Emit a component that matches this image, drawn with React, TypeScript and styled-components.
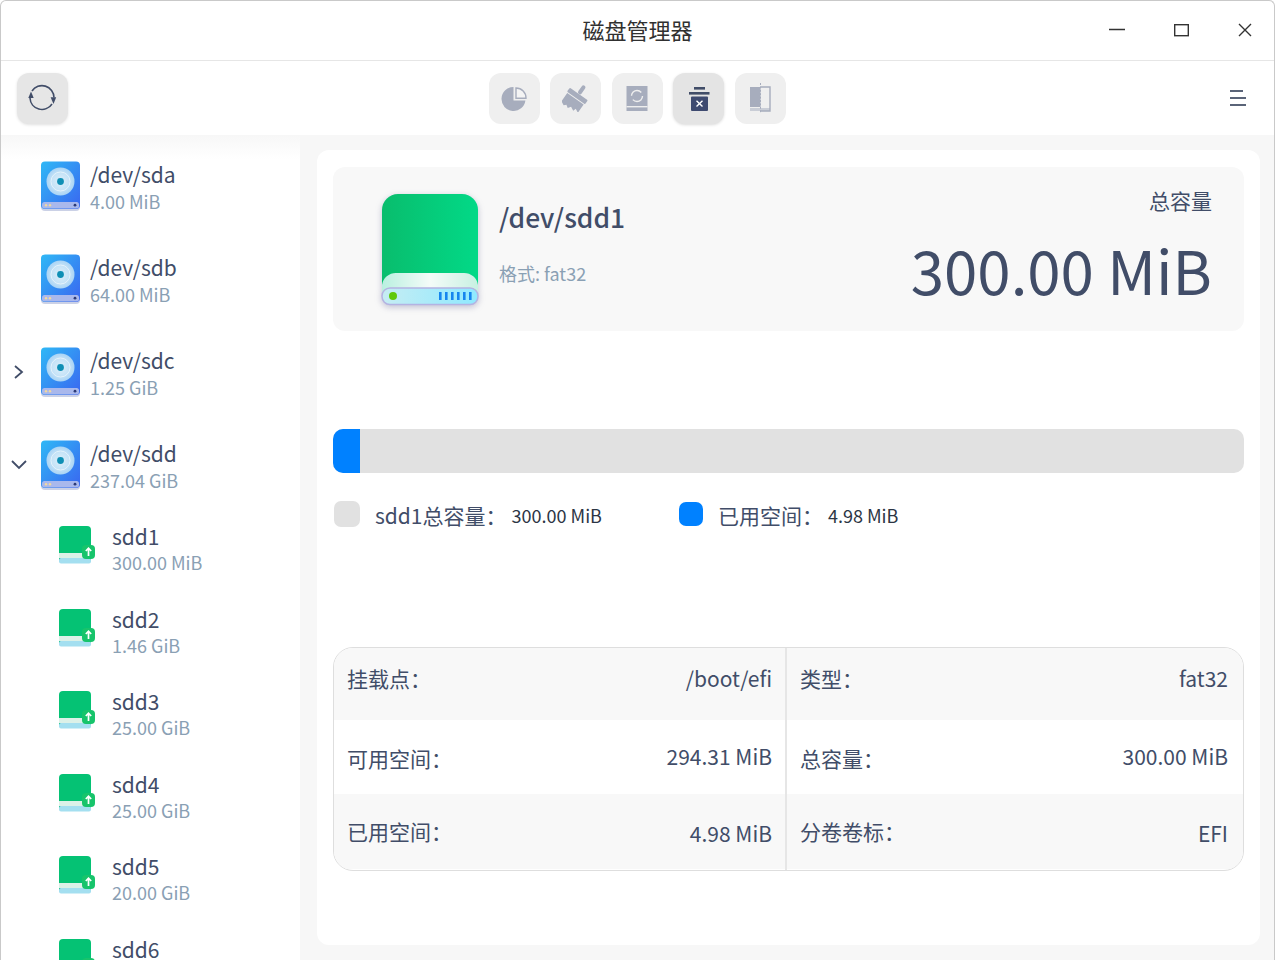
import styled, { createGlobalStyle } from 'styled-components'

const GlobalStyle = createGlobalStyle`
  html, body {
    margin: 0;
    padding: 0;
    background: #fff;
    font-family: 'Noto Sans CJK SC', 'Noto Sans', sans-serif;
    color: #414d68;
  }
  * { box-sizing: border-box; }
`

const partitions = [
  { name: 'sdd1', size: '300.00 MiB' },
  { name: 'sdd2', size: '1.46 GiB' },
  { name: 'sdd3', size: '25.00 GiB' },
  { name: 'sdd4', size: '25.00 GiB' },
  { name: 'sdd5', size: '20.00 GiB' },
  { name: 'sdd6', size: '' }
]

const disks = [
  { name: '/dev/sda', size: '4.00 MiB', arrow: '' },
  { name: '/dev/sdb', size: '64.00 MiB', arrow: '' },
  { name: '/dev/sdc', size: '1.25 GiB', arrow: 'right' },
  { name: '/dev/sdd', size: '237.04 GiB', arrow: 'down' }
]

const DiskIcon = () => (
  <svg width="42" height="52" viewBox="0 0 42 52">
    <defs>
      <linearGradient id="diskBlue" x1="0" y1="0" x2="1" y2="1">
        <stop offset="0" stopColor="#2fb8f6" />
        <stop offset="1" stopColor="#3a66f0" />
      </linearGradient>
      <radialGradient id="diskCd">
        <stop offset="0" stopColor="#dceffa" />
        <stop offset="0.6" stopColor="#c6e3f7" />
        <stop offset="1" stopColor="#a9d4f5" />
      </radialGradient>
    </defs>
    <rect x="1" y="2" width="39" height="48" rx="4" fill="#8c9ac8" opacity="0.45" />
    <rect x="1" y="0.5" width="39" height="47.5" rx="4" fill="url(#diskBlue)" />
    <circle cx="20.5" cy="20.5" r="14" fill="url(#diskCd)" />
    <circle cx="20.5" cy="20.5" r="9.5" fill="none" stroke="#e4f3fc" strokeWidth="1" />
    <circle cx="20.5" cy="20.5" r="3.4" fill="#0f8fb5" />
    <rect x="2" y="41" width="37" height="6.5" rx="2.5" fill="#a9b8ec" />
    <circle cx="6" cy="44.2" r="1.2" fill="#f0d9a0" />
    <circle cx="10" cy="44.2" r="1.2" fill="#f0d9a0" />
    <circle cx="35" cy="44.2" r="1.4" fill="#2c3a78" />
  </svg>
)

const PartIcon = () => (
  <svg width="36" height="40" viewBox="0 0 36 40">
    <rect x="0" y="0" width="32" height="37" rx="4" fill="#05c274" />
    <rect x="0" y="27" width="32" height="5" fill="#dcf1e8" />
    <rect x="0" y="32" width="32" height="5.5" rx="2" fill="#a4dff0" />
    <rect x="23" y="19" width="13" height="14" rx="4" fill="#17c46b" />
    <path d="M29.5 30v-7.5M26.8 25l2.7-2.8 2.7 2.8" stroke="#fff" strokeWidth="1.7" fill="none" />
  </svg>
)

const BigDriveIcon = () => (
  <DriveSvg width="100" height="114" viewBox="0 0 100 114">
    <defs>
      <linearGradient id="driveGreen" x1="0" y1="0" x2="1" y2="0">
        <stop offset="0" stopColor="#09bd6d" />
        <stop offset="1" stopColor="#02d987" />
      </linearGradient>
      <linearGradient id="driveFace" x1="0" y1="0" x2="1" y2="0">
        <stop offset="0" stopColor="#b9f0e0" />
        <stop offset="0.5" stopColor="#f4fbf8" />
        <stop offset="1" stopColor="#c8f0e2" />
      </linearGradient>
      <linearGradient id="driveSlot" x1="0" y1="0" x2="1" y2="0">
        <stop offset="0" stopColor="#c6edf3" />
        <stop offset="1" stopColor="#8fe9ff" />
      </linearGradient>
    </defs>
    <rect x="2" y="1" width="96" height="108" rx="16" fill="url(#driveGreen)" />
    <path d="M2 92a14 14 0 0 1 14-12h68a14 14 0 0 1 14 12v8H2z" fill="url(#driveFace)" />
    <rect x="2" y="95" width="96" height="16.5" rx="8" fill="url(#driveSlot)" stroke="#b4b3e2" strokeWidth="1.5" />
    <circle cx="13" cy="103" r="4" fill="#5fc90a" />
    <g fill="#1585ee">
      <rect x="59" y="99" width="2.6" height="8" />
      <rect x="65" y="99" width="2.6" height="8" />
      <rect x="71" y="99" width="2.6" height="8" />
      <rect x="77" y="99" width="2.6" height="8" />
      <rect x="83" y="99" width="2.6" height="8" />
      <rect x="89" y="99" width="2.6" height="8" />
    </g>
  </DriveSvg>
)

const App = () => {
  return (
    <Win>
      <GlobalStyle />
      <TitleBar>
        <Title>磁盘管理器</Title>
        <WinButtons>
          <WinButton>
            <svg width="18" height="18" viewBox="0 0 18 18"><path d="M1 8.5h16" stroke="#333" strokeWidth="1.4" /></svg>
          </WinButton>
          <WinButton>
            <svg width="18" height="18" viewBox="0 0 18 18"><rect x="2.7" y="3.7" width="13.6" height="11" fill="none" stroke="#333" strokeWidth="1.4" /></svg>
          </WinButton>
          <WinButton>
            <svg width="18" height="18" viewBox="0 0 18 18"><path d="M3 3l12 12M15 3L3 15" stroke="#333" strokeWidth="1.4" /></svg>
          </WinButton>
        </WinButtons>
      </TitleBar>

      <ToolBar>
        <RefreshButton>
          <svg width="30" height="30" viewBox="0 0 30 30" fill="none">
            <path d="M5 9A12 12 0 0 1 27 15.5" stroke="#414d68" strokeWidth="1.6" />
            <path d="M25 22A12 12 0 0 1 3 16" stroke="#414d68" strokeWidth="1.6" />
            <path d="M4 9.5L1.3 16h5.4z" fill="#414d68" />
            <path d="M26.5 22L23.6 15.3h5.6z" fill="#414d68" />
          </svg>
        </RefreshButton>
        <ToolGroup>
          <ToolButton>
            <svg width="26" height="26" viewBox="0 0 26 26">
              <path d="M12.5 2V15.5H24.4A12 12 0 1 1 12.5 2Z" fill="#a7adbd" />
              <path d="M15 3A10 10 0 0 1 25 13.3H15Z" fill="#f4f4f4" stroke="#a7adbd" strokeWidth="1.4" />
            </svg>
          </ToolButton>
          <ToolButton>
            <svg width="28" height="28" viewBox="0 0 28 28">
              <g transform="rotate(35 14 14)" fill="#a7adbd">
                <rect x="12" y="-1" width="4" height="10" rx="2" />
                <rect x="3" y="9" width="22" height="5" rx="1" />
                <path d="M4 15h20v10l-4-2-1 3-4-2-2 3-3-2-2 2-4-2z" />
              </g>
            </svg>
          </ToolButton>
          <ToolButton>
            <svg width="24" height="28" viewBox="0 0 24 28" fill="none">
              <rect x="1.5" y="2" width="21" height="25" fill="#a7adbd" />
              <rect x="1.5" y="22" width="21" height="1.4" fill="#eee" />
              <circle cx="12" cy="12" r="5.5" stroke="#eee" strokeWidth="1.4" strokeDasharray="13 4" />
            </svg>
          </ToolButton>
          <ToolButton active>
            <svg width="24" height="28" viewBox="0 0 24 28">
              <rect x="7" y="3" width="11" height="2.6" fill="#414d68" />
              <rect x="2" y="8" width="20.5" height="2.6" fill="#414d68" />
              <rect x="4" y="12.5" width="17" height="14.5" rx="1" fill="#3e4a70" />
              <path d="M9.5 16.8l6 5.8M15.5 16.8l-6 5.8" stroke="#fff" strokeWidth="1.4" />
            </svg>
          </ToolButton>
          <ToolButton>
            <svg width="26" height="30" viewBox="0 0 26 30" fill="none">
              <rect x="3" y="4" width="10.5" height="20" fill="#a7adbd" />
              <rect x="3" y="25" width="20" height="3" fill="#c9cdd6" />
              <path d="M13.5 4H23V28H13.5" stroke="#a7adbd" strokeWidth="1.4" />
              <path d="M13.5 0v30" stroke="#a7adbd" strokeWidth="1" strokeDasharray="2 1.4" />
            </svg>
          </ToolButton>
        </ToolGroup>
        <Burger>
          <span />
          <span />
          <span />
        </Burger>
      </ToolBar>

      <Body>
        <SideBar>
          {disks.map(disk => (
            <DiskRow key={disk.name}>
              <Arrow>
                {disk.arrow === 'right' && (
                  <svg width="14" height="16" viewBox="0 0 14 16"><path d="M4 2l7 6-7 6" fill="none" stroke="#414d68" strokeWidth="1.8" /></svg>
                )}
                {disk.arrow === 'down' && (
                  <svg width="16" height="14" viewBox="0 0 16 14"><path d="M1 3l7 7 7-7" fill="none" stroke="#414d68" strokeWidth="1.8" /></svg>
                )}
              </Arrow>
              <DiskIcon />
              <RowText>
                <RowName>{disk.name}</RowName>
                <RowSize>{disk.size}</RowSize>
              </RowText>
            </DiskRow>
          ))}
          {partitions.map(part => (
            <PartRow key={part.name}>
              <PartIcon />
              <RowText>
                <RowName>{part.name}</RowName>
                <RowSize>{part.size}</RowSize>
              </RowText>
            </PartRow>
          ))}
        </SideBar>

        <Main>
          <Card>
            <InfoPanel>
              <BigDriveIcon />
              <InfoText>
                <InfoName>/dev/sdd1</InfoName>
                <InfoFormat>格式: fat32</InfoFormat>
              </InfoText>
              <Capacity>
                <CapacityLabel>总容量</CapacityLabel>
                <CapacityValue>300.00 MiB</CapacityValue>
              </Capacity>
            </InfoPanel>

            <UsageBar>
              <UsageFill style={{ width: `${(27 / 911) * 100}%` }} />
            </UsageBar>

            <Legend>
              <LegendItem wide>
                <Swatch color="#e1e1e1" size={26} />
                <LegendLabel>sdd1总容量：</LegendLabel>
                <LegendValue>300.00 MiB</LegendValue>
              </LegendItem>
              <LegendItem>
                <Swatch color="#0081ff" size={24} />
                <LegendLabel>已用空间：</LegendLabel>
                <LegendValue>4.98 MiB</LegendValue>
              </LegendItem>
            </Legend>

            <Table>
              <TableRow height={72} lift={12} shaded>
                <Cell first><span>挂载点：</span><span>/boot/efi</span></Cell>
                <Cell><span>类型：</span><span>fat32</span></Cell>
              </TableRow>
              <TableRow height={74} labelShift={1} valueShift={-2}>
                <Cell first><span>可用空间：</span><span>294.31 MiB</span></Cell>
                <Cell><span>总容量：</span><span>300.00 MiB</span></Cell>
              </TableRow>
              <TableRow height={75} labelShift={-2} valueShift={2} shaded>
                <Cell first><span>已用空间：</span><span>4.98 MiB</span></Cell>
                <Cell><span>分卷卷标：</span><span>EFI</span></Cell>
              </TableRow>
            </Table>
          </Card>
        </Main>
      </Body>
    </Win>
  )
}

export default App

const Win = styled.div`
  width: 1275px;
  height: 960px;
  overflow: hidden;
  border: 1px solid #c9c9c9;
  border-bottom: none;
  border-radius: 6px 6px 0 0;
  display: flex;
  flex-direction: column;
  background: #fff;
`
const TitleBar = styled.header`
  height: 60px;
  flex: none;
  position: relative;
  display: flex;
  align-items: center;
  justify-content: center;
  border-bottom: 1px solid #e6e6e6;
  padding-bottom: 3px;
`
const Title = styled.h1`
  margin: 0;
  font-size: 22px;
  font-weight: 400;
  color: #303030;
`
const WinButtons = styled.div`
  position: absolute;
  right: 0;
  top: 0;
  display: flex;
`
const WinButton = styled.div`
  width: 64px;
  height: 58px;
  padding-left: 6px;
  display: flex;
  align-items: center;
  justify-content: center;
`
const ToolBar = styled.div`
  height: 74px;
  flex: none;
  display: flex;
  align-items: center;
  position: relative;
  padding: 0 28px 0 16px;
  justify-content: space-between;
`
const RefreshButton = styled.div`
  width: 51px;
  height: 51px;
  padding: 0 2px 2px 0;
  border-radius: 12px;
  background: #e6e6e6;
  box-shadow: 0 1px 3px rgba(0, 0, 0, 0.12);
  display: flex;
  align-items: center;
  justify-content: center;
`
const ToolGroup = styled.div`
  display: flex;
  gap: 10.5px;
  margin-right: 24px;
`
const ToolButton = styled.div<{ active?: boolean }>`
  width: 51px;
  height: 51px;
  border-radius: 12px;
  background: ${props => (props.active ? '#e4e4e4' : '#efefef')};
  box-shadow: ${props => (props.active ? '0 1px 3px rgba(0, 0, 0, 0.15)' : 'none')};
  display: flex;
  align-items: center;
  justify-content: center;
`
const Burger = styled.div`
  width: 16px;
  display: flex;
  flex-direction: column;
  gap: 5.5px;

  span {
    display: block;
    height: 1.5px;
    background: #5a6478;
  }
  span:first-child {
    width: 13px;
  }
`
const Body = styled.div`
  flex: 1;
  min-height: 0;
  display: flex;
  background: #f7f7f7;
`
const SideBar = styled.aside`
  width: 299px;
  flex: none;
  overflow: hidden;
  padding-top: 26px;
  background: linear-gradient(#f7f7f7, #fff 24px);
`
const DiskRow = styled.div`
  height: 93px;
  display: flex;
  align-items: flex-start;

  &:nth-child(4) {
    height: 84px;
  }
`
const Arrow = styled.div`
  width: 39px;
  height: 50px;
  padding-left: 10px;
  display: flex;
  align-items: center;
`
const RowText = styled.div`
  margin-left: 8px;
  display: flex;
  flex-direction: column;
  margin-top: -2px;
`
const RowName = styled.div`
  font-size: 21px;
  line-height: 30px;
  color: #414d68;
`
const RowSize = styled.div`
  font-size: 18px;
  line-height: 24px;
  color: #8aa0b4;
`
const PartRow = styled.div`
  height: 82.6px;
  display: flex;
  align-items: flex-start;
  padding-left: 58px;
  padding-top: 2px;

  ${RowText} {
    margin-left: 17px;
    margin-top: -4px;
  }
  ${RowName} {
    line-height: 28px;
  }
`
const Main = styled.main`
  flex: 1;
  min-width: 0;
  padding: 15px 14px 15px 17px;
`
const Card = styled.div`
  height: 795px;
  border-radius: 12px;
  background: #fff;
  padding: 17px 16px;
`
const InfoPanel = styled.section`
  height: 164px;
  border-radius: 12px;
  background: #f8f8f8;
  display: flex;
  align-items: flex-start;
  padding: 26px 32px 0 47px;
`
const DriveSvg = styled.svg`
  flex: none;
  filter: drop-shadow(0 2px 3px rgba(90, 90, 140, 0.35));
`
const InfoText = styled.div`
  margin-left: 19px;
  padding-top: 5px;
`
const InfoName = styled.div`
  font-size: 26.4px;
  line-height: 38px;
  font-weight: 500;
  color: #414d68;
`
const InfoFormat = styled.div`
  font-size: 18px;
  line-height: 26px;
  margin-top: 24px;
  color: #8aa0b4;
`
const Capacity = styled.div`
  margin-left: auto;
  display: flex;
  flex-direction: column;
  align-items: flex-end;
  margin-top: -7px;
`
const CapacityLabel = styled.div`
  font-size: 21px;
  line-height: 28px;
  color: #414d68;
`
const CapacityValue = styled.div`
  font-size: 60px;
  line-height: 80px;
  margin-top: 15px;
  color: #414d68;
`
const UsageBar = styled.div`
  height: 44px;
  margin-top: 98px;
  border-radius: 10px;
  background: #e1e1e1;
  overflow: hidden;
`
const UsageFill = styled.div`
  height: 100%;
  background: #0081ff;
`
const Legend = styled.div`
  display: flex;
  height: 30px;
  margin-top: 27px;
`
const LegendItem = styled.div<{ wide?: boolean }>`
  width: ${props => (props.wide ? '345px' : 'auto')};
  padding-left: 1px;
  display: flex;
  align-items: center;
`
const Swatch = styled.div<{ color: string; size: number }>`
  width: ${props => props.size}px;
  height: ${props => props.size}px;
  border-radius: 7px;
  margin-top: -3px;
  background: ${props => props.color};
`
const LegendLabel = styled.span`
  margin-left: 15px;
  font-size: 21px;
  line-height: 30px;
  color: #414d68;
`
const LegendValue = styled.span`
  margin-left: 5px;
  font-size: 18px;
  color: #2c3544;
`
const Table = styled.div`
  margin-top: 117px;
  height: 224px;
  border: 1px solid #dedede;
  border-radius: 20px;
  overflow: hidden;
`
const TableRow = styled.div<{
  height: number
  shaded?: boolean
  lift?: number
  labelShift?: number
  valueShift?: number
}>`
  height: ${props => props.height}px;
  display: flex;
  padding-bottom: ${props => props.lift ?? 0}px;
  background: ${props => (props.shaded ? '#f8f8f8' : '#fff')};

  span:first-child {
    margin-top: ${props => props.labelShift ?? 0}px;
  }
  span:last-child {
    margin-top: ${props => props.valueShift ?? 0}px;
  }
`
const Cell = styled.div<{ first?: boolean }>`
  width: ${props => (props.first ? '453px' : 'auto')};
  flex: ${props => (props.first ? 'none' : '1')};
  display: flex;
  align-items: center;
  justify-content: space-between;
  padding: 0 15px 0 13px;
  font-size: 21px;
  color: #414d68;
  position: relative;

  ${props =>
    props.first &&
    `&::after {
      content: '';
      position: absolute;
      right: 0;
      top: 0;
      bottom: -14px;
      width: 2px;
      background: #e6e6e6;
    }`}
`
